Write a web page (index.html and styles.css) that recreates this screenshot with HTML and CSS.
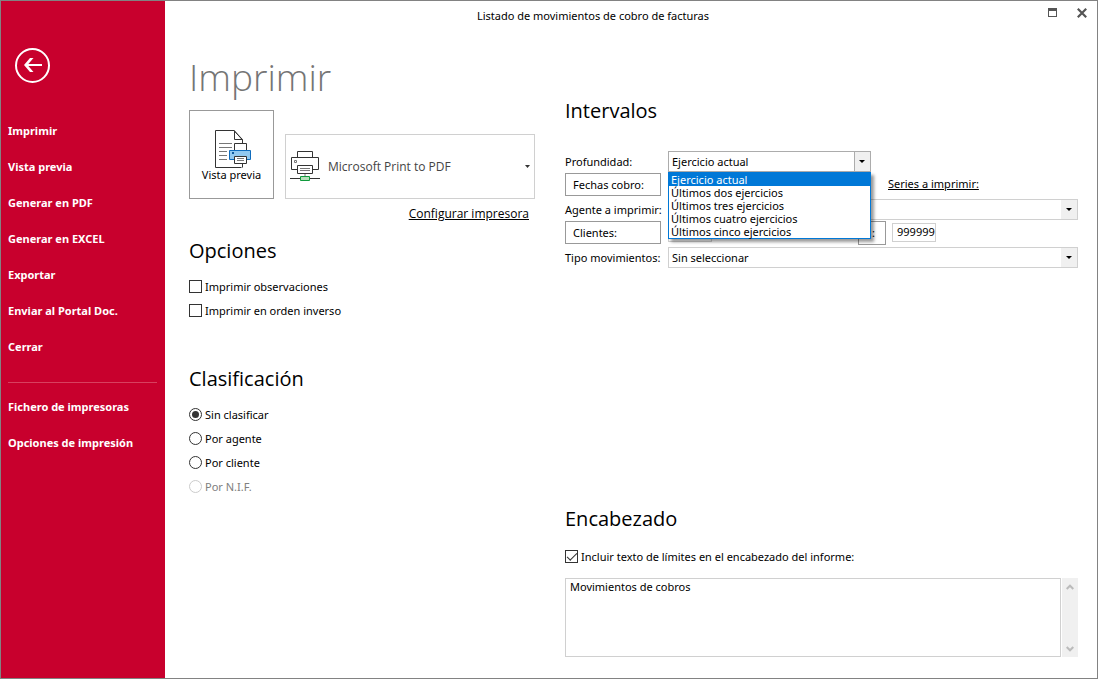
FILE: index.html
```html
<!DOCTYPE html>
<html lang="es">
<head>
<meta charset="utf-8">
<title>Listado de movimientos de cobro de facturas</title>
<link rel="stylesheet" href="styles.css">
</head>
<body>
<div class="window">
  <aside class="sidebar">
    <button class="back" type="button" aria-label="Volver">
      <svg width="35" height="35" viewBox="0 0 35 35" fill="none" stroke="#fff">
        <circle cx="17.500" cy="17.500" r="16.500" stroke-width="2"/>
        <path d="M27 17H11" stroke-width="2"/>
        <path d="M18.500 10h-3.500l-6 7 6 7h3.500l-6-7z" fill="#fff" stroke="none"/>
      </svg>
    </button>
    <nav class="menu">
      <a href="#">Imprimir</a>
      <a href="#">Vista previa</a>
      <a href="#">Generar en PDF</a>
      <a href="#">Generar en EXCEL</a>
      <a href="#">Exportar</a>
      <a href="#">Enviar al Portal Doc.</a>
      <a href="#">Cerrar</a>
      <hr>
      <a href="#">Fichero de impresoras</a>
      <a href="#">Opciones de impresión</a>
    </nav>
  </aside>
  <main class="main">
    <header class="titlebar">
      <span class="title">Listado de movimientos de cobro de facturas</span>
      <div class="window-buttons">
        <button type="button" aria-label="Maximizar">
          <svg width="9" height="9" viewBox="0 0 9 9"><path d="M0 0h9v9H0zM1 3v5h7V3z" fill="#555" fill-rule="evenodd"/></svg>
        </button>
        <button type="button" aria-label="Cerrar ventana">
          <svg width="10" height="10" viewBox="0 0 10 10"><path d="M.8.8l8.400 8.400M9.200.8L.8 9.200" stroke="#555" stroke-width="2.200"/></svg>
        </button>
      </div>
    </header>
    <div class="columns">
      <div class="left">
        <h1>Imprimir</h1>
        <div class="printer-row">
          <button class="preview" type="button">
            <svg width="39" height="38" viewBox="-2 0 39 38" fill="none">
              <path d="M27.500 37.500H1.500V.5H20L28.500 10v4" stroke="#333"/>
              <path d="M20.500.5V9.500H28.500M20 .5l8.500 9" stroke="#333"/>
              <path d="M5 13.500h13M5 17.500h13M5 21.500h8M5 25.500h8M5 29.500h8" stroke="#777"/>
              <path d="M20.500 21V13.500H32.500V21" stroke="#333" fill="#fff"/>
              <path d="M15.500 20.500H36.500V29.500H15.500z" fill="#91c9f0" stroke="#0f6cbd"/>
              <path d="M18 22h2v2h-2z" fill="#0f5a9e"/>
              <path d="M20.500 26.500H32.500V33.500H20.500z" fill="#fff" stroke="#333"/>
              <path d="M23 28.500h7M23 30.500h7" stroke="#777"/>
              <path d="M28.500 34v3.500" stroke="#333"/>
            </svg>
            <span>Vista previa</span>
          </button>
          <button class="printer" type="button">
            <svg width="30" height="31" viewBox="0 0 30 31" fill="none">
              <path d="M7.500 6.500V.5H22.500V6.500" stroke="#333"/>
              <path d="M7.500 18.500H1.500V6.500H28.500V18.500H22.500" stroke="#333"/>
              <path d="M4.500 9.500h2v2h-2z" stroke="#777"/>
              <path d="M7.500 14.500H22.500V22.500H7.500z" fill="#fff" stroke="#333"/>
              <path d="M10 17.500h10M10 19.500h10" stroke="#777"/>
              <path d="M15 23v3" stroke="#bbb" stroke-width="2"/>
              <path d="M0 27.500h30" stroke="#333"/>
              <path d="M10.500 25.500h9v4h-9z" fill="#b5dfb9" stroke="#109a3c"/>
            </svg>
            <span class="printer-name">Microsoft Print to PDF</span>
            <svg width="5" height="3" viewBox="0 0 5 3"><path d="M0 0h5L2.500 3z" fill="#333"/></svg>
          </button>
        </div>
        <a class="configure" href="#">Configurar impresora</a>
        <section class="group">
          <h2>Opciones</h2>
          <label class="check"><input type="checkbox"><span>Imprimir observaciones</span></label>
          <label class="check"><input type="checkbox"><span>Imprimir en orden inverso</span></label>
        </section>
        <section class="group sorting">
          <h2>Clasificación</h2>
          <label class="check"><input type="radio" name="orden" checked><span>Sin clasificar</span></label>
          <label class="check"><input type="radio" name="orden"><span>Por agente</span></label>
          <label class="check"><input type="radio" name="orden"><span>Por cliente</span></label>
          <label class="check"><input type="radio" name="orden" disabled><span>Por N.I.F.</span></label>
        </section>
      </div>
      <div class="right">
        <section class="group">
          <h2>Intervalos</h2>
          <div class="fields">
            <label for="profundidad">Profundidad:</label>
            <div class="combo depth">
              <select id="profundidad"><option>Ejercicio actual</option></select>
              <ul class="dropdown">
                <li class="selected">Ejercicio actual</li>
                <li>Últimos dos ejercicios</li>
                <li>Últimos tres ejercicios</li>
                <li>Últimos cuatro ejercicios</li>
                <li>Últimos cinco ejercicios</li>
              </ul>
            </div>
            <button class="range" type="button">Fechas cobro:</button>
            <a class="series" href="#">Series a imprimir:</a>
            <label for="agente">Agente a imprimir:</label>
            <div class="combo"><select id="agente"></select></div>
            <button class="range" type="button">Clientes:</button>
            <div class="clients">
              <input type="text" aria-label="Cliente inicial">
              <button class="range to" type="button">:</button>
              <input type="text" value="999999" aria-label="Cliente final">
            </div>
            <label for="tipo">Tipo movimientos:</label>
            <div class="combo"><select id="tipo"><option>Sin seleccionar</option></select></div>
          </div>
        </section>
        <section class="group heading">
          <h2>Encabezado</h2>
          <label class="check"><input type="checkbox" checked><span>Incluir texto de límites en el encabezado del informe:</span></label>
          <div class="memo">
            <textarea aria-label="Texto del encabezado">Movimientos de cobros</textarea>
            <div class="scrollbar">
              <svg width="8" height="6" viewBox="0 0 8 6"><path d="M.7 5L4 1.700 7.300 5" fill="none" stroke="#bbb" stroke-width="2"/></svg>
              <svg width="8" height="6" viewBox="0 0 8 6"><path d="M.7 1L4 4.300 7.300 1" fill="none" stroke="#bbb" stroke-width="2"/></svg>
            </div>
          </div>
        </section>
      </div>
    </div>
  </main>
</div>
</body>
</html>
```
FILE: styles.css
```css
* { box-sizing: border-box; }

body {
  margin: 0;
  background: #fff;
  color: #000;
  font: 11px/16px "Noto Sans", "Open Sans", sans-serif;
}

button, input, select, textarea {
  margin: 0;
  padding: 0;
  border: 0;
  border-radius: 0;
  background: none;
  color: inherit;
  font: inherit;
}

a { color: inherit; }
h1, h2, ul { margin: 0; padding: 0; font-weight: 400; }

.window {
  display: grid;
  grid-template-columns: 164px 1fr;
  min-height: 100vh;
  border: 1px solid #828282;
}

.sidebar { padding: 47px 8px 0 7px; background: #c8002d; color: #fff; }
.back { display: block; margin-left: 7px; height: 35px; }
.back svg { display: block; }

.menu {
  display: flex;
  flex-direction: column;
  gap: 20px;
  margin-top: 40px;
}
.menu a { font-weight: 700; text-decoration: none; }
.menu hr { width: 100%; height: 1px; margin: 7px 0 -4px; border: 0; background: #d8405f; }

.main { display: flex; flex-direction: column; }

.titlebar { display: flex; height: 46px; padding-top: 7px; }
.title { flex: 1; text-align: center; }
.window-buttons {
  display: flex;
  justify-content: flex-end;
  align-items: flex-start;
  gap: 20px;
  width: 76px;
  padding-right: 10px;
}
.window-buttons svg { display: block; }

.columns {
  flex: 1;
  display: grid;
  grid-template-columns: 346px 1fr;
  gap: 30px;
  padding: 0 19px 21px 24px;
}

h1, h2 { font-family: "Open Sans", "Noto Sans", sans-serif; }
h1 { color: #757575; font-size: 37px; font-weight: 300; line-height: 60px; }
h2 { font-size: 20px; line-height: 32px; }

.printer-row { display: flex; align-items: flex-end; gap: 11px; margin-top: 3px; }
.preview {
  display: flex;
  flex-direction: column;
  align-items: center;
  justify-content: center;
  width: 85px;
  height: 89px;
  padding-top: 3px;
  border: 1px solid #999;
  line-height: 14px;
}
.printer {
  flex: 1;
  display: flex;
  align-items: center;
  gap: 8px;
  height: 65px;
  padding: 0 4px;
  border: 1px solid #d0d0d0;
}
.printer-name, .configure { font-family: "Open Sans", "Noto Sans", sans-serif; font-size: 12px; }
.printer-name { flex: 1; color: #444; text-align: left; }
.configure { display: block; margin: 7px 6px 0 0; text-align: right; }

.left .group { margin-top: 13px; }
.left .sorting { margin-top: 40px; }

.check { display: flex; align-items: center; gap: 3px; height: 24px; }
h2 + .check { margin-top: 8px; }
.check input {
  appearance: none;
  display: grid;
  place-items: center;
  width: 13px;
  height: 13px;
  margin-bottom: 1px;
  border: 1px solid #333;
}
.check input[type="radio"] { border-radius: 50%; }
.check input[type="radio"]:checked::before {
  content: "";
  width: 7px;
  height: 7px;
  border-radius: 50%;
  background: #333;
}
.check input[type="checkbox"]:checked::before {
  content: "";
  width: 9px;
  height: 4px;
  border: solid #333;
  border-width: 0 0 1px 1px;
  transform: translateY(-1px) rotate(-45deg);
}
.check input:disabled { border-color: #ccc; }
.check input:disabled + span { color: #808080; }

.right { display: flex; flex-direction: column; padding-top: 48px; }
.fields {
  display: grid;
  grid-template-columns: 96px 1fr;
  grid-auto-rows: 24px;
  column-gap: 7px;
  align-items: start;
  margin-top: 22px;
}
.fields label { padding-top: 5px; white-space: nowrap; }
.range {
  height: 23px;
  padding-left: 7px;
  border: 1px solid #999;
  text-align: left;
}

.combo { position: relative; margin-top: 2px; }
.combo select {
  appearance: none;
  display: block;
  width: 100%;
  height: 21px;
  padding: 0 20px 0 3px;
  border: 1px solid #d0d0d0;
  background: linear-gradient(#f0f0f0, #f0f0f0) right / 16px 100% no-repeat;
}
.combo::after {
  content: "";
  position: absolute;
  top: 9px;
  right: 6px;
  border: solid transparent;
  border-width: 3px 3px 0;
  border-top-color: #000;
}
.depth { width: 203px; }
.depth select {
  border-color: #acacac;
  background: linear-gradient(90deg, #acacac 1px, #f0f0f0 1px) right / 16px 100% no-repeat;
}
.dropdown {
  position: absolute;
  top: 100%;
  left: 0;
  z-index: 1;
  width: 100%;
  border: 1px solid #0078d7;
  background: #fff;
  box-shadow: 3px 3px 3px rgba(0, 0, 0, .4);
  list-style: none;
}
.dropdown li { height: 13px; padding-left: 2px; line-height: 13px; }
.dropdown .selected { background: #0078d7; color: #fff; }

.series { justify-self: start; margin: 3px 0 0 220px; }

.clients { display: flex; align-items: flex-start; }
.clients input {
  width: 44px;
  height: 19px;
  margin-top: 2px;
  padding: 0 0 2px 4px;
  border: 1px solid #d0d0d0;
}
.to { width: 28px; height: 24px; margin: 0 6px 0 146px; padding-left: 13px; }

.heading { margin-top: auto; }
.heading h2 + .check { margin-top: 10px; }
.memo { display: flex; gap: 1px; height: 79px; margin-top: 9px; }
.memo textarea {
  flex: 1;
  padding: 0 4px;
  border: 1px solid #d0d0d0;
  resize: none;
}
.scrollbar {
  display: flex;
  flex-direction: column;
  align-items: center;
  justify-content: space-between;
  width: 16px;
  padding: 6px 0 5px;
  background: #f0f0f0;
}
```
